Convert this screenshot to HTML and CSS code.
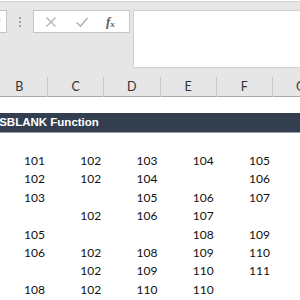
FILE: index.html
```html
<!DOCTYPE html>
<html>
<head>
<meta charset="utf-8">
<link rel="stylesheet" href="styles.css">
</head>
<body>
<div class="app">
  <div class="toolbar">
    <div class="namebox"><span class="caret"></span></div>
    <div class="grip"><i></i><i></i><i></i></div>
    <div class="fbuttons">
      <svg class="ico" width="14" height="14" viewBox="0 0 14 14"><path d="M2.5 2.5 L11.5 11.5 M11.5 2.5 L2.5 11.5" stroke="#b4b4b4" stroke-width="1.4" fill="none"/></svg>
      <svg class="ico" width="14" height="14" viewBox="0 0 14 14"><path d="M1.5 7.5 L5.5 11 L12.5 3" stroke="#b4b4b4" stroke-width="1.6" fill="none"/></svg>
      <span class="fx">f<sub>x</sub></span>
    </div>
    <div class="finput"></div>
  </div>
  <div class="colheads">
    <div class="ch">B</div><div class="ch">C</div><div class="ch">D</div><div class="ch">E</div><div class="ch">F</div><div class="ch">G</div>
  </div>
  <div class="sheet">
    <div class="gap1"></div>
    <div class="title">ISBLANK Function</div>
    <div class="gap2"></div>
    <div class="row"><span>101</span><span>102</span><span>103</span><span>104</span><span>105</span></div>
    <div class="row"><span>102</span><span>102</span><span>104</span><span></span><span>106</span></div>
    <div class="row"><span>103</span><span></span><span>105</span><span>106</span><span>107</span></div>
    <div class="row"><span></span><span>102</span><span>106</span><span>107</span><span></span></div>
    <div class="row"><span>105</span><span></span><span></span><span>108</span><span>109</span></div>
    <div class="row"><span>106</span><span>102</span><span>108</span><span>109</span><span>110</span></div>
    <div class="row"><span></span><span>102</span><span>109</span><span>110</span><span>111</span></div>
    <div class="row"><span>108</span><span>102</span><span>110</span><span>110</span><span></span></div>
  </div>
</div>
</body>
</html>
```
FILE: styles.css
```css
html, body {
  margin: 0;
  padding: 0;
  background: #ffffff;
  overflow: hidden;
}
.app {
  width: 300px;
  height: 300px;
  overflow: hidden;
  font-family: Lato, "Liberation Sans", sans-serif;
}
.toolbar {
  height: 75px;
  background: #e6e6e6;
  border-top: 1px solid #d2d2d2;
  margin-top: 1px;
  display: flex;
  align-items: flex-start;
  padding-top: 8px;
  box-sizing: border-box;
}
.namebox {
  width: 46px;
  height: 23px;
  margin-left: -39px;
  background: #fff;
  border: 1px solid #c6c6c6;
  box-sizing: border-box;
  position: relative;
}
.caret {
  position: absolute;
  right: 5px;
  top: 9px;
  width: 0;
  height: 0;
  border-left: 2px solid transparent;
  border-right: 2px solid transparent;
  border-top: 2px solid #999;
}
.grip {
  width: 3px;
  margin-left: 12px;
  margin-top: 7px;
  display: flex;
  flex-direction: column;
  gap: 2px;
}
.grip i {
  display: block;
  width: 2px;
  height: 2px;
  background: #a0a0a0;
}
.fbuttons {
  margin-left: 11px;
  width: 97px;
  height: 23px;
  background: #fff;
  border: 1px solid #c6c6c6;
  box-sizing: border-box;
  display: flex;
  align-items: center;
  padding-left: 10px;
  gap: 17px;
}
.fx {
  font-family: "Liberation Serif", serif;
  font-style: italic;
  font-weight: bold;
  font-size: 13px;
  color: #5a5a5a;
  margin-left: 0;
  line-height: 1;
}
.fx sub {
  font-size: 9px;
  vertical-align: -1px;
}
.finput {
  margin-left: 3px;
  flex: 1;
  height: 58px;
  background: #fff;
  border: 1px solid #d0d0d0;
  box-sizing: border-box;
  margin-right: -4px;
}
.colheads {
  height: 20px;
  background: #e6e6e6;
  border-bottom: 1px solid #a9a9a9;
  display: grid;
  grid-template-columns: repeat(6, 56.25px);
  margin-left: -8.25px;
  padding-top: 0;
}
.ch {
  border-right: 1px solid #c8c8c8;
  text-align: center;
  font-size: 12.5px;
  line-height: 20px;
  color: #333;
  margin-top: 1px;
}
.gap1 {
  height: 16px;
}
.title {
  height: 19px;
  background: #333f4f;
  border-bottom: 1px solid #9aa1ab;
  color: #fff;
  font-family: "Liberation Sans", Arial, sans-serif;
  font-weight: bold;
  font-size: 11.5px;
  line-height: 19px;
  margin-left: -4px;
  white-space: nowrap;
}
.gap2 {
  height: 19px;
}
.row {
  height: 18.4px;
  display: grid;
  grid-template-columns: repeat(5, 56.25px);
  margin-left: -8.25px;
  font-size: 12px;
  line-height: 18.4px;
  color: #111;
}
.row span {
  text-align: right;
  padding-right: 3px;
}
```
